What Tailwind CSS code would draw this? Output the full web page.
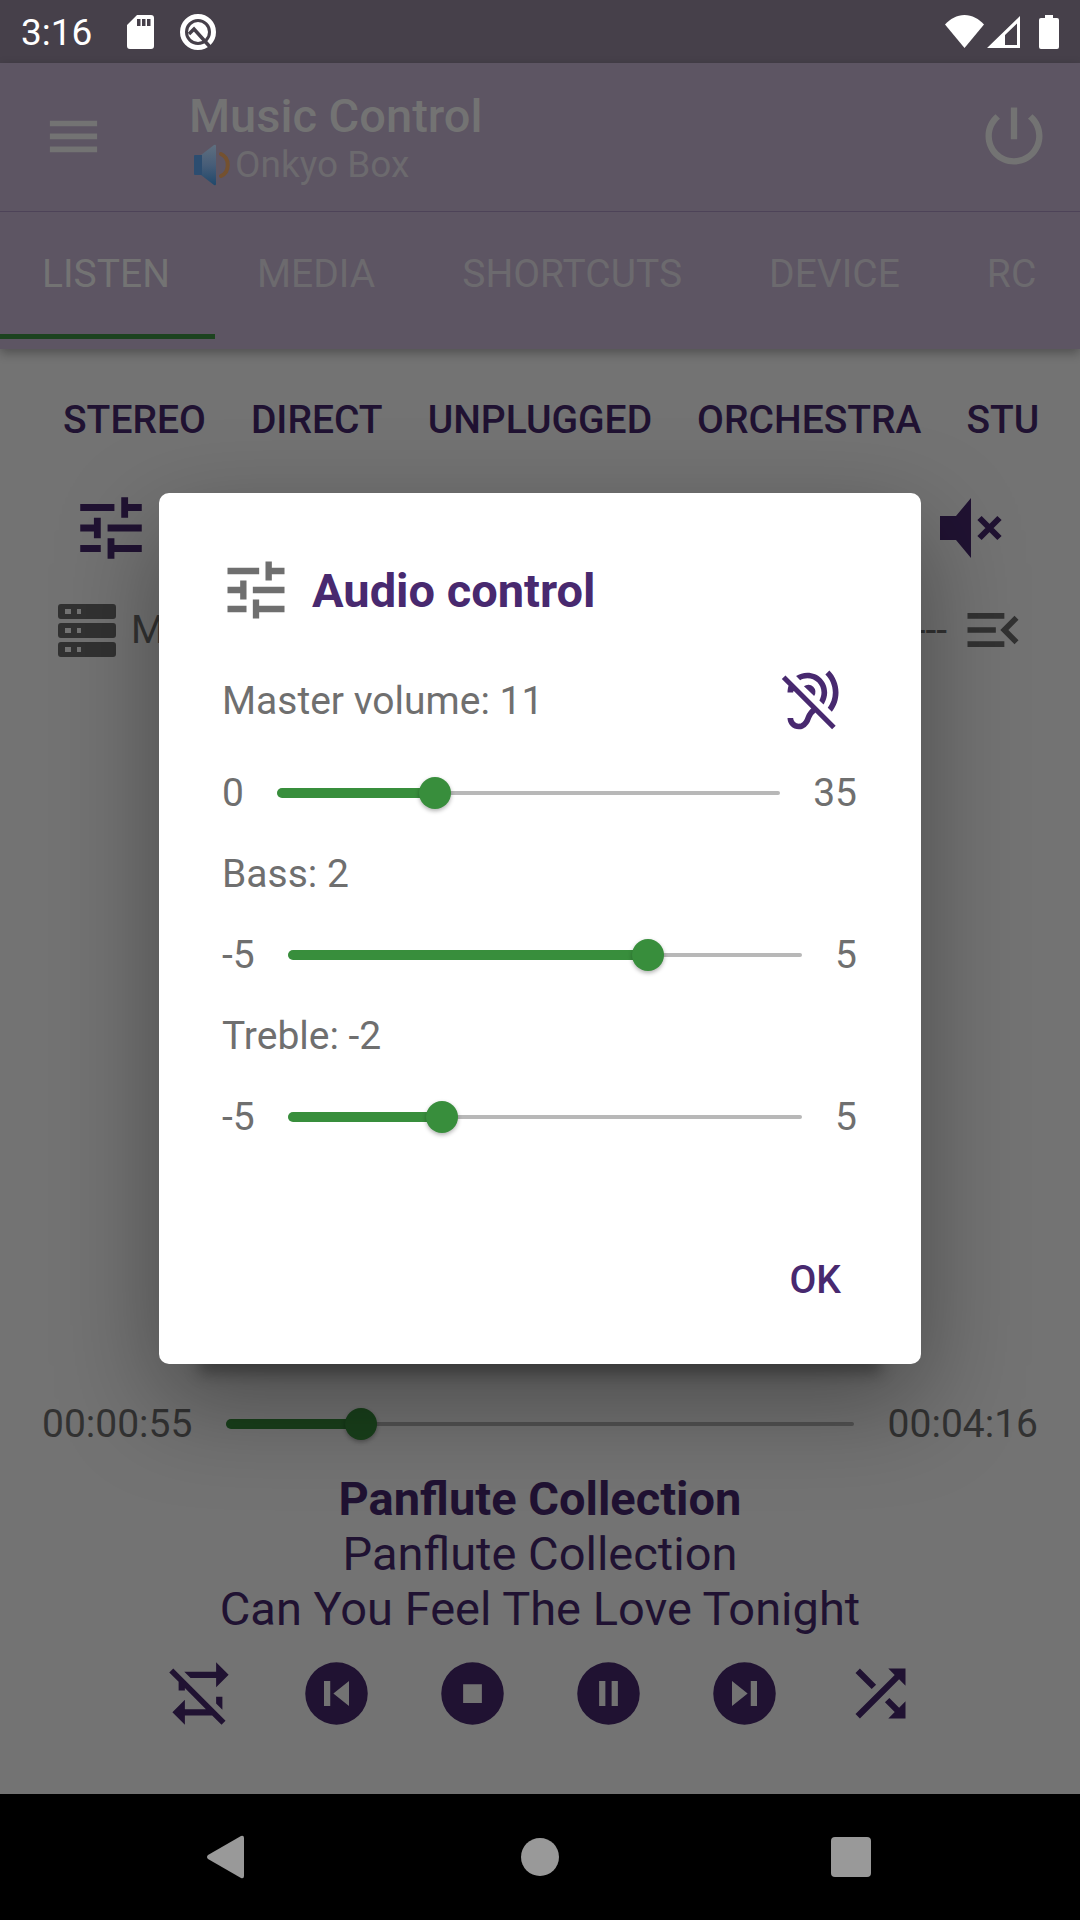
<!DOCTYPE html>
<html lang="en">
<head>
<meta charset="utf-8">
<meta name="viewport" content="width=device-width, initial-scale=1">
<title>Music Control</title>
<script src="https://cdn.jsdelivr.net/npm/@tailwindcss/browser@4"></script>
</head>
<body class="flex min-h-screen flex-col bg-[#737373] font-['Roboto',sans-serif] text-[39px] leading-[46px]">

<!-- System status bar -->
<div class="flex h-[63px] shrink-0 items-center bg-[#46404a] pr-[21px] pl-[21px] text-[37px] leading-[43px] text-white">
  <span class="pt-[2px]">3:16</span>
  <svg class="ml-[35px] h-[34px] w-[27px]" viewBox="0 0 27 34" aria-hidden="true">
    <path fill="#fff" fill-rule="evenodd" d="M10 0h14a3 3 0 0 1 3 3v28a3 3 0 0 1-3 3H3a3 3 0 0 1-3-3V10zM10 4v7h3.500V4zm5 0v7h3.500V4zm5 0v7h3.500V4z"/>
  </svg>
  <svg class="ml-[26px] h-[38px] w-[36px]" viewBox="0 0 36 38" aria-hidden="true">
    <circle cx="18" cy="19" r="15.500" fill="none" stroke="#fff" stroke-width="5"/>
    <circle cx="18" cy="19" r="10" fill="#fff"/>
    <path d="M9 21l5-5L31 35" fill="none" stroke="#46404a" stroke-width="3.500"/>
  </svg>
  <svg class="ml-auto h-[34px] w-[39px]" viewBox="0 0 39 34" aria-hidden="true">
    <path fill="#fff" d="M19.500 33L0 9.500C5 4 12 0 19.500 0S34 4 39 9.500z"/>
  </svg>
  <svg class="ml-[3px] h-[34px] w-[33px]" viewBox="0 0 33 34" aria-hidden="true">
    <path fill="#fff" fill-rule="evenodd" d="M33 1v32H0zM30 8.500L18 20v10h12z"/>
  </svg>
  <svg class="ml-[19px] h-[34px] w-[20px]" viewBox="0 0 20 34" aria-hidden="true">
    <path fill="#fff" d="M6 0h8v3h4a2 2 0 0 1 2 2v27a2 2 0 0 1-2 2H2a2 2 0 0 1-2-2V5a2 2 0 0 1 2-2h4z"/>
  </svg>
</div>

<div class="relative flex flex-1 flex-col">

  <header class="bg-[#5d5563] text-[#6c6a6e] shadow-[0_4px_10px_rgba(0,0,0,0.3)]">
    <div class="flex h-[149px] items-center border-b border-[#4d4358] pr-[28px] pl-[42px]">
      <button type="button" aria-label="Open menu" class="pb-[2px] text-[#737373]">
        <svg class="size-[63px]" viewBox="0 0 24 24" fill="currentColor"><path d="M3 18h18v-2.200H3zm0-5h18v-2.100H3zM3 6v2.100h18V6z"/></svg>
      </button>
      <div class="ml-[84px] flex-1">
        <h1 class="text-[47px] leading-[55px] font-medium text-[#737373]">Music Control</h1>
        <p class="flex items-center pl-[5px] text-[37px] leading-[43px]">
          <svg class="mr-[5px] h-[42px] w-[36px]" viewBox="0 0 36 42" aria-hidden="true">
            <defs>
              <linearGradient id="cone" x1="0" y1="0" x2="0" y2="1"><stop offset="0" stop-color="#5f6f7f"/><stop offset=".5" stop-color="#475d78"/><stop offset="1" stop-color="#20486b"/></linearGradient>
            </defs>
            <path fill="url(#cone)" d="M7 11L20 1q2-1 2 1v38q0 2-2 1L7 31z"/>
            <path fill="#2c4d70" d="M0 12q0-1 1-1h7v20H1q-1 0-1-1z"/>
            <path fill="none" stroke="#74512f" stroke-width="4" stroke-linecap="round" d="M27 10c9 4 9 18 0 22"/>
          </svg>
          <span>Onkyo Box</span>
        </p>
      </div>
      <button type="button" aria-label="Power" class="pb-[2px] text-[#737373]">
        <svg class="size-[76px]" viewBox="0 0 24 24" fill="currentColor"><path d="M13 3h-2v10h2V3zm4.830 2.170l-1.420 1.420C17.990 7.860 19 9.810 19 12c0 3.870-3.130 7-7 7s-7-3.130-7-7c0-2.190 1.010-4.140 2.580-5.420L6.170 5.170C4.230 6.820 3 9.260 3 12c0 4.970 4.030 9 9 9s9-4.030 9-9c0-2.740-1.230-5.180-3.170-6.830z"/></svg>
      </button>
    </div>
    <nav class="flex overflow-hidden pb-[10px]">
      <a href="#listen" aria-current="page" class="flex h-[127px] shrink-0 items-center border-b-[5px] border-[#1c431f] pt-[2px] pr-[45px] pl-[42px] text-[#737373]">LISTEN</a>
      <a href="#media" class="flex h-[127px] shrink-0 items-center border-b-[5px] border-transparent pt-[2px] pr-[45px] pl-[42px]">MEDIA</a>
      <a href="#shortcuts" class="flex h-[127px] shrink-0 items-center border-b-[5px] border-transparent pt-[2px] pr-[45px] pl-[42px]">SHORTCUTS</a>
      <a href="#device" class="flex h-[127px] shrink-0 items-center border-b-[5px] border-transparent pt-[2px] pr-[45px] pl-[42px]">DEVICE</a>
      <a href="#rc" class="flex h-[127px] shrink-0 items-center border-b-[5px] border-transparent pt-[2px] pr-[45px] pl-[42px]">RC</a>
    </nav>
  </header>

  <main class="flex flex-1 flex-col pt-[48px] pb-[63px] text-[#201232]">
    <div class="mx-[42px] flex gap-[45px] overflow-hidden pl-[21px] font-medium">
      <button type="button" class="shrink-0">STEREO</button>
      <button type="button" class="shrink-0">DIRECT</button>
      <button type="button" class="shrink-0">UNPLUGGED</button>
      <button type="button" class="shrink-0">ORCHESTRA</button>
      <button type="button" class="shrink-0">STU</button>
    </div>

    <div class="mt-[44px] flex justify-between pr-[68px] pl-[70px]">
      <button type="button" aria-label="Audio control">
        <svg class="size-[82px]" viewBox="0 0 24 24" fill="currentColor"><path d="M3 17v2h6v-2H3zM3 5v2h10V5H3zm10 16v-2h8v-2h-8v-2h-2v6h2zM7 9v2H3v2h4v2h2V9H7zm14 4v-2H11v2h10zm-6-4h2V7h4V5h-4V3h-2v6z"/></svg>
      </button>
      <button type="button" aria-label="Mute" class="flex size-[82px] items-center justify-center">
        <svg class="size-[62px]" viewBox="0 0 62 62" fill="currentColor"><path d="M0 19h16L31 1v60L16 43H0z"/><path d="M39.500 21L59.500 41M59.500 21L39.500 41" stroke="currentColor" stroke-width="6"/></svg>
      </button>
    </div>

    <div class="mt-[27px] flex items-center pr-[53px] pl-[58px] text-[#323232]">
      <svg class="mr-[15px] h-[53px] w-[58px]" viewBox="0 0 58 53" fill="currentColor" fill-rule="evenodd" aria-hidden="true">
        <path d="M3 0h52a3 3 0 0 1 3 3v9a3 3 0 0 1-3 3H3a3 3 0 0 1-3-3V3a3 3 0 0 1 3-3zM7 5v5h6V5zm12 0v5h4V5z"/>
        <path d="M3 19h52a3 3 0 0 1 3 3v9a3 3 0 0 1-3 3H3a3 3 0 0 1-3-3v-9a3 3 0 0 1 3-3zM7 24v5h6v-5zm12 0v5h4v-5z"/>
        <path d="M3 38h52a3 3 0 0 1 3 3v9a3 3 0 0 1-3 3H3a3 3 0 0 1-3-3v-9a3 3 0 0 1 3-3zM7 43v5h6v-5zm12 0v5h4v-5z"/>
      </svg>
      <span>M</span>
      <span class="mr-3 ml-auto">---</span>
      <button type="button" aria-label="Open list">
        <svg class="size-[68px]" viewBox="0 0 24 24" fill="currentColor"><path d="M3 18h13v-2H3v2zm0-5h10v-2H3v2zm0-7v2h13V6H3zm18 9.590L17.420 12 21 8.410 19.590 7l-5 5 5 5L21 15.590z"/></svg>
      </button>
    </div>

    <div class="mt-auto flex items-center gap-[18px] px-[42px] text-[#323232]">
      <span>00:00:55</span>
      <div class="grid flex-1 items-center">
        <div class="col-start-1 row-start-1 px-4"><div class="h-1 rounded-full bg-[#535353]"></div></div>
        <div class="col-start-1 row-start-1 px-4"><div class="h-[10px] rounded-full bg-[#19401b]" style="width:21.500%"></div></div>
        <input type="range" min="0" max="256" value="55" aria-label="Playback position" class="z-10 col-start-1 row-start-1 h-8 w-full appearance-none bg-transparent [&::-webkit-slider-thumb]:size-8 [&::-webkit-slider-thumb]:appearance-none [&::-webkit-slider-thumb]:rounded-full [&::-webkit-slider-thumb]:bg-[#19401b] [&::-webkit-slider-thumb]:shadow-[0_2px_4px_rgba(0,0,0,0.3)]">
      </div>
      <span>00:04:16</span>
    </div>

    <div class="mt-[24px] text-center text-[47px] leading-[55px]">
      <p class="font-bold">Panflute Collection</p>
      <p>Panflute Collection</p>
      <p>Can You Feel The Love Tonight</p>
    </div>

    <div class="mt-[20px] flex justify-center gap-[61px]">
      <button type="button" aria-label="Repeat off"><svg class="size-[75px]" viewBox="0 0 24 24" fill="currentColor"><path d="M2 5.270L3.280 4 20 20.720 18.730 22l-3-3H7v3l-4-4 4-4v3h6.730L7 10.270V11H5V8.270zM17 13h2v4.180l-2-2zM17 5V2l4 4-4 4V7H8.820l-2-2z"/></svg></button>
      <button type="button" aria-label="Previous"><svg class="size-[75px]" viewBox="0 0 24 24" fill="currentColor" fill-rule="evenodd"><path d="M12 2a10 10 0 1 0 0 20a10 10 0 1 0 0-20zM8 8v8h2V8zM16 8v8l-5-4z"/></svg></button>
      <button type="button" aria-label="Stop"><svg class="size-[75px]" viewBox="0 0 24 24" fill="currentColor" fill-rule="evenodd"><path d="M12 2a10 10 0 1 0 0 20a10 10 0 1 0 0-20zM9 9v6h6V9z"/></svg></button>
      <button type="button" aria-label="Pause"><svg class="size-[75px]" viewBox="0 0 24 24" fill="currentColor" fill-rule="evenodd"><path d="M12 2a10 10 0 1 0 0 20a10 10 0 1 0 0-20zM9 8v8h2V8zM13 8v8h2V8z"/></svg></button>
      <button type="button" aria-label="Next"><svg class="size-[75px]" viewBox="0 0 24 24" fill="currentColor" fill-rule="evenodd"><path d="M12 2a10 10 0 1 0 0 20a10 10 0 1 0 0-20zM8 8v8l5-4zM14 8v8h2V8z"/></svg></button>
      <button type="button" aria-label="Shuffle"><svg class="size-[75px]" viewBox="0 0 24 24" fill="currentColor"><path d="M14.830 13.410L13.420 14.820 16.550 17.950 14.500 20H20V14.500L17.960 16.540zM14.500 4L16.540 6.040 4 18.590 5.410 20 17.960 7.460 20 9.500V4zM10.590 9.170L5.410 4 4 5.410 9.170 10.580z"/></svg></button>
    </div>
  </main>

  <!-- Audio control dialog, centred over the dimmed app -->
  <div class="absolute inset-0 z-20 flex items-center justify-center px-[159px]">
    <section role="dialog" aria-modal="true" aria-labelledby="dialog-title" class="flex w-full flex-col rounded-[10px] bg-white pt-[59px] pr-[64px] pb-[36px] pl-[63px] text-[#6f6f6f] shadow-[0_36px_100px_rgba(0,0,0,0.36),0_50px_14px_-40px_rgba(0,0,0,0.3)]">
      <div class="-ml-[4px] flex items-center gap-[18px]">
        <svg class="size-[76px]" viewBox="0 0 24 24" fill="currentColor" aria-hidden="true"><path d="M3 17v2h6v-2H3zM3 5v2h10V5H3zm10 16v-2h8v-2h-8v-2h-2v6h2zM7 9v2H3v2h4v2h2V9H7zm14 4v-2H11v2h10zm-6-4h2V7h4V5h-4V3h-2v6z"/></svg>
        <h2 id="dialog-title" class="text-[47px] leading-[55px] font-bold text-[#48296f]">Audio control</h2>
      </div>

      <div class="mt-[39px] flex flex-col gap-[35px]">
        <div class="flex items-center justify-between">
          <label for="volume">Master volume: 11</label>
          <button type="button" aria-label="Mute sound" class="flex w-[88px] justify-center text-[#48296f]">
            <svg class="size-[68px]" viewBox="0 0 24 24" fill="currentColor">
              <path d="M6.030 3.200C7.150 2.440 8.510 2 10 2c3.930 0 7 3.070 7 7 0 1.260-.38 2.650-1.070 3.900l-.21.350-1.470-1.470c.45-.88.75-1.900.75-2.780 0-2.800-2.200-5-5-5-.94 0-1.800.25-2.530.68zM17.210 14.380l1.430 1.430C20.110 13.930 21 11.570 21 9c0-3.040-1.230-5.790-3.220-7.780l-1.420 1.420C17.990 4.260 19 6.510 19 9c0 2.020-.67 3.880-1.790 5.380z"/>
              <path d="M8.800 6.800A2.500 2.500 0 0 1 12.400 10.200zM3 9C3 8.100 3.200 7.100 3.500 6.300L5.300 8C5.100 8.300 5 8.700 5 9zM1 4.270L2.280 3 20 20.720 18.730 22z"/>
              <path fill="none" stroke="currentColor" stroke-width="2" d="M4 18C4 19.660 5.340 21 7 21c.4 0 .85-.1 1.200-.25 1.100-.55 1.700-1.350 2.200-2.950.5-1.500 1.300-2.200 2.300-3"/>
            </svg>
          </button>
        </div>
        <div class="flex items-center gap-[17px]">
          <span>0</span>
          <div class="grid flex-1 items-center">
            <div class="col-start-1 row-start-1 px-4"><div class="h-1 rounded-full bg-[#b8b8b8]"></div></div>
            <div class="col-start-1 row-start-1 px-4"><div class="h-[10px] rounded-full bg-[#388e3c]" style="width:31.400%"></div></div>
            <input id="volume" type="range" min="0" max="35" value="11" class="z-10 col-start-1 row-start-1 h-8 w-full appearance-none bg-transparent [&::-webkit-slider-thumb]:size-8 [&::-webkit-slider-thumb]:appearance-none [&::-webkit-slider-thumb]:rounded-full [&::-webkit-slider-thumb]:bg-[#388e3c] [&::-webkit-slider-thumb]:shadow-[0_2px_4px_rgba(0,0,0,0.3)]">
          </div>
          <span>35</span>
        </div>
        <label for="bass">Bass: 2</label>
        <div class="flex items-center gap-[17px]">
          <span>-5</span>
          <div class="grid flex-1 items-center">
            <div class="col-start-1 row-start-1 px-4"><div class="h-1 rounded-full bg-[#b8b8b8]"></div></div>
            <div class="col-start-1 row-start-1 px-4"><div class="h-[10px] rounded-full bg-[#388e3c]" style="width:70%"></div></div>
            <input id="bass" type="range" min="-5" max="5" value="2" class="z-10 col-start-1 row-start-1 h-8 w-full appearance-none bg-transparent [&::-webkit-slider-thumb]:size-8 [&::-webkit-slider-thumb]:appearance-none [&::-webkit-slider-thumb]:rounded-full [&::-webkit-slider-thumb]:bg-[#388e3c] [&::-webkit-slider-thumb]:shadow-[0_2px_4px_rgba(0,0,0,0.3)]">
          </div>
          <span>5</span>
        </div>
        <label for="treble">Treble: -2</label>
        <div class="flex items-center gap-[17px]">
          <span>-5</span>
          <div class="grid flex-1 items-center">
            <div class="col-start-1 row-start-1 px-4"><div class="h-1 rounded-full bg-[#b8b8b8]"></div></div>
            <div class="col-start-1 row-start-1 px-4"><div class="h-[10px] rounded-full bg-[#388e3c]" style="width:30%"></div></div>
            <input id="treble" type="range" min="-5" max="5" value="-2" class="z-10 col-start-1 row-start-1 h-8 w-full appearance-none bg-transparent [&::-webkit-slider-thumb]:size-8 [&::-webkit-slider-thumb]:appearance-none [&::-webkit-slider-thumb]:rounded-full [&::-webkit-slider-thumb]:bg-[#388e3c] [&::-webkit-slider-thumb]:shadow-[0_2px_4px_rgba(0,0,0,0.3)]">
          </div>
          <span>5</span>
        </div>
      </div>

      <button type="button" class="mt-[92px] h-24 self-end px-4 font-medium text-[#48296f]">OK</button>
    </section>
  </div>
</div>

<!-- System navigation bar -->
<nav aria-label="System" class="flex h-[126px] shrink-0 items-center justify-center gap-[215px] bg-black text-[#999]">
  <button type="button" aria-label="Back" class="flex w-24 justify-center"><svg class="h-[44px] w-[48px]" viewBox="0 0 48 44" fill="currentColor"><path d="M36 1q3-1 3 2v38q0 3-3 2L3 24q-2-2 0-4z"/></svg></button>
  <button type="button" aria-label="Home" class="flex w-24 justify-center"><span class="size-[38px] rounded-full bg-[#999]"></span></button>
  <button type="button" aria-label="Overview" class="flex w-24 justify-center"><span class="size-[40px] rounded bg-[#999]"></span></button>
</nav>

</body>
</html>
